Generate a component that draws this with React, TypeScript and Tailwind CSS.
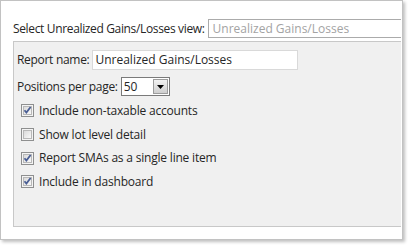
import React from 'react';

const CheckBox = ({ checked }: { checked: boolean }) => (
  <svg width="13" height="13" viewBox="0 0 13 13" className="shrink-0">
    <defs>
      <linearGradient id="cbg" x1="0" y1="0" x2="1" y2="1">
        <stop offset="0" stopColor="#d8d8d8" />
        <stop offset="1" stopColor="#fbfbfb" />
      </linearGradient>
    </defs>
    <rect x="0.5" y="0.5" width="12" height="12" fill="#f4f4f4" stroke="#8e8f8f" />
    <rect x="2.5" y="2.5" width="8" height="8" fill="url(#cbg)" stroke="#b8b8b8" />
    {checked && (
      <path d="M3.5 6.2 L5.4 8.6 L9.6 3" fill="none" stroke="#4a5e94" strokeWidth="1.8" />
    )}
  </svg>
);

const options = [
  { label: 'Include non-taxable accounts', checked: true },
  { label: 'Show lot level detail', checked: false },
  { label: 'Report SMAs as a single line item', checked: true },
  { label: 'Include in dashboard', checked: true },
];

const App = () => {
  return (
    <div className="w-[412px] h-[249px] bg-white font-['Open_Sans',sans-serif] text-[12px] text-[#262626]">
      <div className="w-[403px] h-[240px] border border-[#c2c2c2] bg-white shadow-[2px_2px_3px_rgba(0,0,0,0.25)] overflow-hidden">
        <div className="flex items-center pl-3 pt-[18px]">
          <span className="tracking-[-0.35px]">Select Unrealized Gains/Losses view:</span>
          <div className="ml-[3px] flex-1 mr-[1px] h-[19px] border-l border-t border-b border-[#ababab] flex items-center pl-1 text-[#a3a3a3] bg-white">
            Unrealized Gains/Losses
          </div>
        </div>
        <div className="ml-3 mr-[1px] mt-[3px] h-[186px] border-l border-t border-b border-[#c8c8c8] bg-[#f0f0f0] pl-[3px] pt-[8px]">
          <div className="flex items-center">
            <span className="tracking-[-0.3px]">Report name:</span>
            <div className="ml-[3px] w-[206px] h-[20px] border border-[#d9d9d9] bg-white flex items-center pl-[2px]">
              Unrealized Gains/Losses
            </div>
          </div>
          <div className="flex items-center mt-[7px]">
            <span className="tracking-[-0.3px]">Positions per page:</span>
            <div className="ml-[3px] w-[49px] h-[19px] border border-[#7a7a7a] bg-white flex items-center">
              <span className="flex-1 pl-[2px]">50</span>
              <div className="w-[15px] h-[15px] mr-[1px] border border-[#9c9c9c] bg-gradient-to-b from-[#f2f2f2] to-[#cfcfcf] flex items-center justify-center">
                <svg width="7" height="4" viewBox="0 0 7 4">
                  <path d="M0 0 H7 L3.5 4 Z" fill="#000" />
                </svg>
              </div>
            </div>
          </div>
          <div className="mt-[3px] pl-[4px]">
            {options.map((o) => (
              <div key={o.label} className="flex items-center h-[23.7px] gap-[5px]">
                <CheckBox checked={o.checked} />
                <span className="tracking-[-0.2px]">{o.label}</span>
              </div>
            ))}
          </div>
        </div>
      </div>
    </div>
  );
};

export default App;
